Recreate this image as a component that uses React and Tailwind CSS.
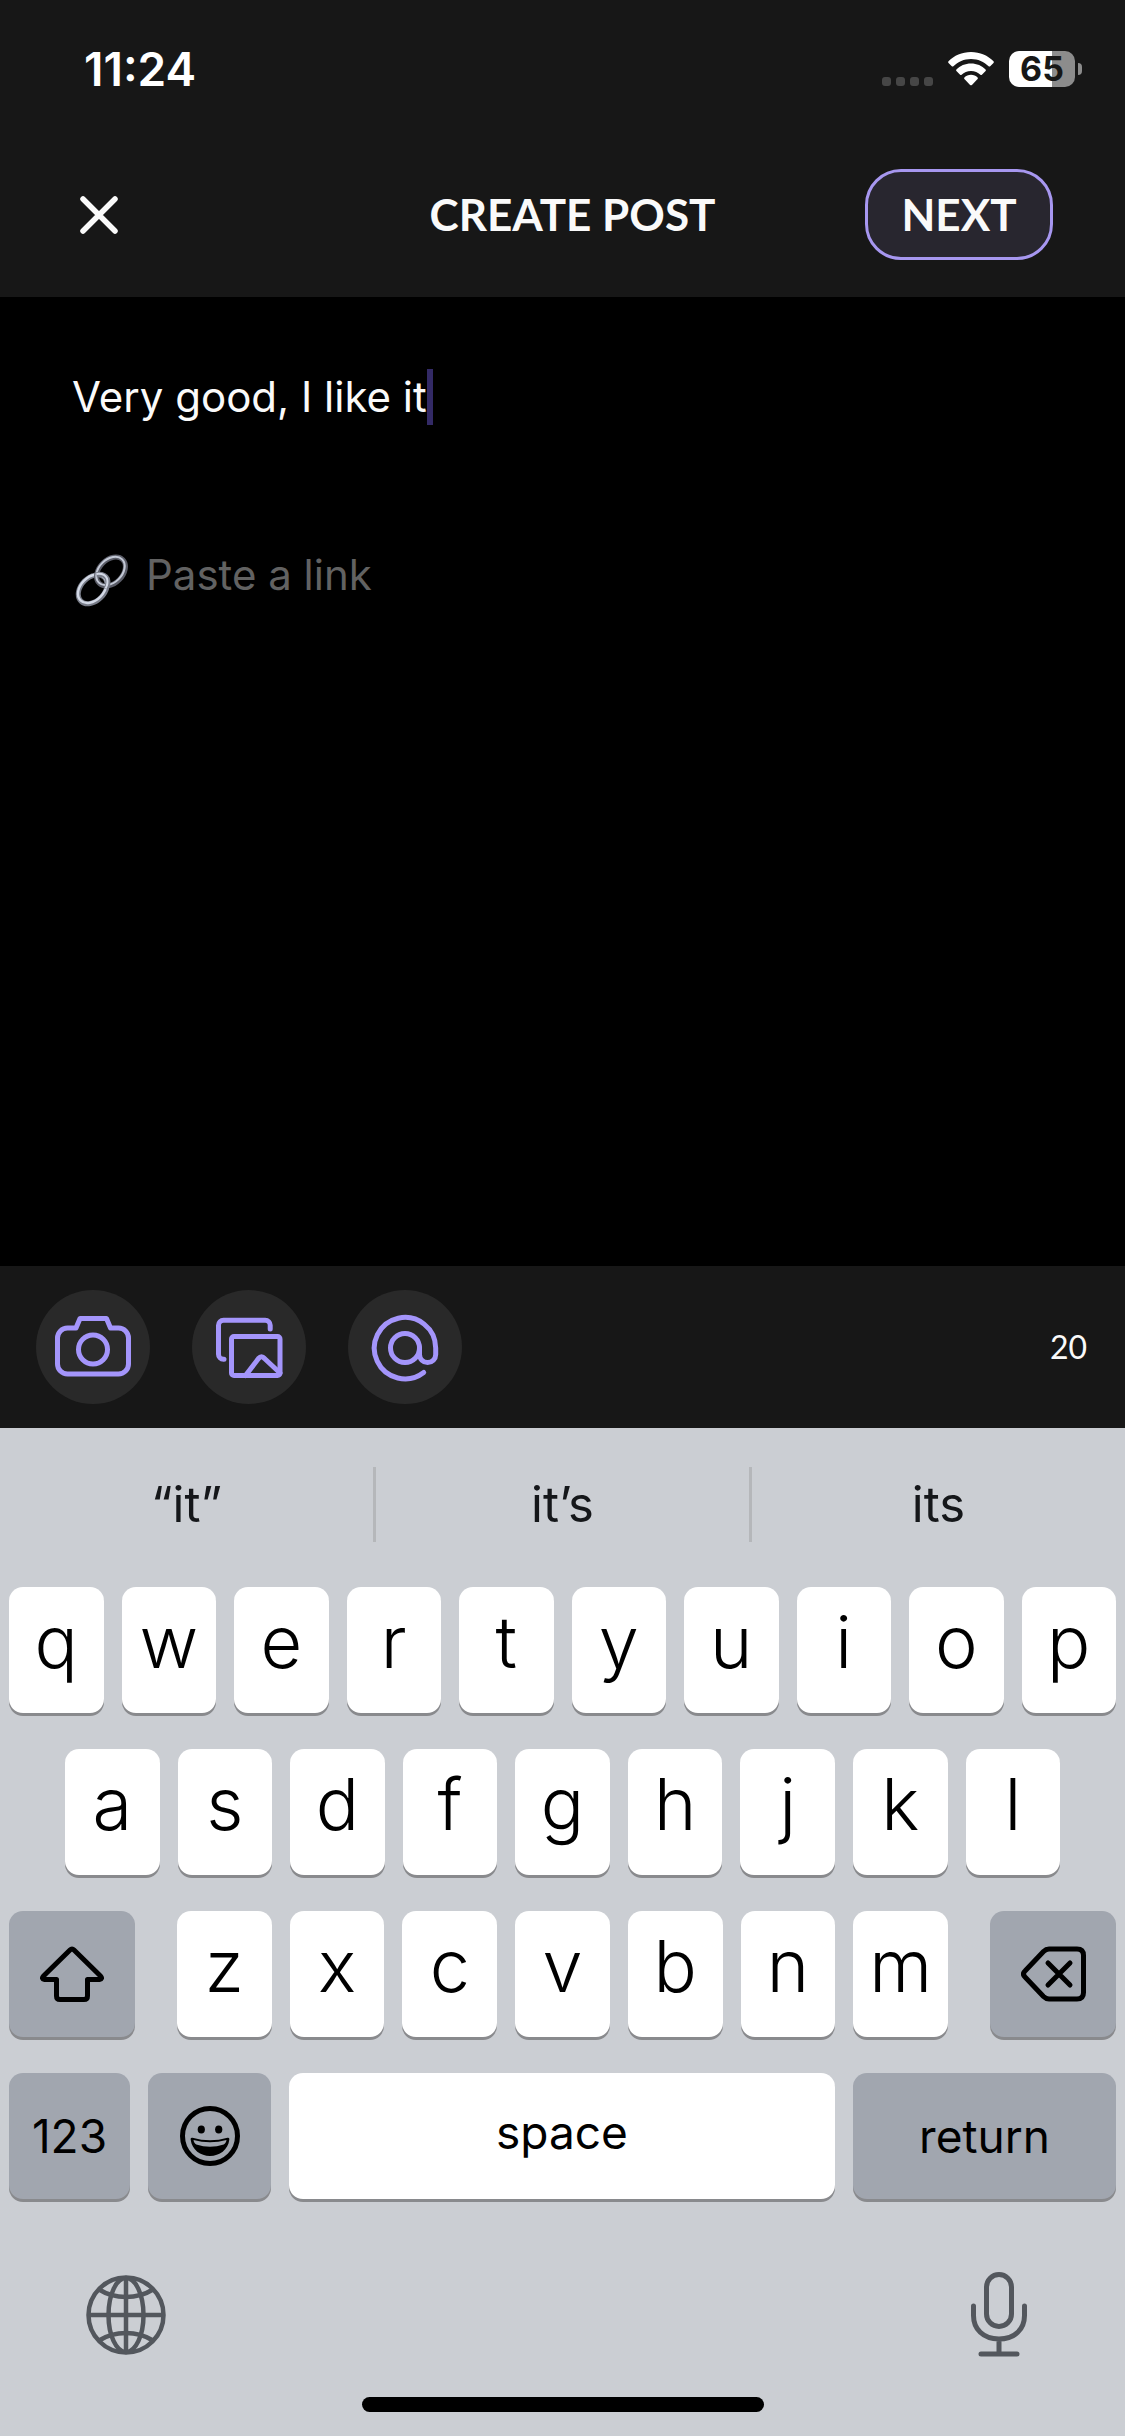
import React, { useState } from 'react';

const suggestions = ['“it”', 'it’s', 'its'];
const topRow = ['q', 'w', 'e', 'r', 't', 'y', 'u', 'i', 'o', 'p'];
const middleRow = ['a', 's', 'd', 'f', 'g', 'h', 'j', 'k', 'l'];
const bottomRow = ['z', 'x', 'c', 'v', 'b', 'n', 'm'];

const CameraIcon = () => (
  <>
    <path d="M31.5 38H40l4-9.5h26.5l4 9.5h8a10 10 0 0 1 10 10v26a10 10 0 0 1-10 10h-51a10 10 0 0 1-10-10V48a10 10 0 0 1 10-10z" />
    <circle cx="57" cy="59.5" r="14.5" />
  </>
);

const GalleryIcon = () => (
  <>
    <path d="M78.2 39v-3.7a5 5 0 0 0-5-5H31.5a5 5 0 0 0-5 5v29a5 5 0 0 0 5 5h.5" />
    <rect x="39.5" y="46.5" width="48.5" height="39" rx="2.5" />
    <path d="M53.5 85.5l13-17q3-3.500 6 0L88 83" />
  </>
);

const MentionIcon = () => (
  <>
    <circle cx="57" cy="58" r="14.5" />
    <path d="M71.5 58v6.5a8 8 0 0 0 16.2 0V58A30.7 30.7 0 1 0 75.7 82.5" />
  </>
);

const tools = [
  { label: 'Take a photo', Icon: CameraIcon },
  { label: 'Add from gallery', Icon: GalleryIcon },
  { label: 'Mention someone', Icon: MentionIcon }
];

function StatusBar() {
  return (
    <div className="flex items-center justify-between pl-[84px] pr-[43px] h-[138px]">
      <span className="text-[46px] leading-none font-semibold text-white">11:24</span>
      <div className="flex items-center">
        <div className="flex gap-[5px] mt-6 mr-[15px]">
          <i className="size-[9px] rounded-[3px] bg-[#464646]" />
          <i className="size-[9px] rounded-[3px] bg-[#464646]" />
          <i className="size-[9px] rounded-[3px] bg-[#464646]" />
          <i className="size-[9px] rounded-[3px] bg-[#464646]" />
        </div>
        <svg viewBox="0 0 46 34" className="w-[46px] h-[34px] mr-[15px]" fill="#fff">
          <path d="M23 0C32 0 40 3.6 45.5 9.3q.7.8 0 1.600l-3.300 3.300q-.8.700-1.600 0C36 9.800 30 7 23 7S10 9.800 5.400 14.200q-.8.700-1.600 0L.5 10.900q-.7-.8 0-1.600C6 3.600 14 0 23 0z" />
          <path d="M23 11.500c5.800 0 10.900 2.300 14.600 6q.7.800 0 1.600l-3.700 3.600q-.8.700-1.500 0C30 20.400 26.700 19 23 19s-7 1.400-9.400 3.700q-.7.700-1.500 0l-3.700-3.600q-.7-.8 0-1.600c3.700-3.700 8.800-6 14.600-6z" />
          <path d="M23 22.800c2.600 0 4.900 1 6.600 2.600q.7.800 0 1.600l-5.700 5.900q-.9.900-1.800 0L16.400 27q-.7-.8 0-1.600c1.700-1.600 4-2.600 6.600-2.600z" />
        </svg>
        <div className="flex items-center justify-center w-[66px] h-9 rounded-[10px] bg-[linear-gradient(to_right,#fff_65%,#8c8c8c_65%)]">
          <span className="text-[34px] leading-none font-bold text-[#171717]">65</span>
        </div>
        <i className="w-1 h-3 ml-[3px] rounded-r-full bg-[#8c8c8c]" />
      </div>
    </div>
  );
}

function Header() {
  return (
    <header className="grid grid-cols-[188px_1fr_188px] items-center h-[159px] pb-[6px] px-[72px] font-[Lato,sans-serif]">
      <button type="button" aria-label="Close" className="p-2 justify-self-start">
        <svg viewBox="0 0 38 38" className="size-[38px]" fill="none" stroke="#fafafa" strokeWidth="5.5" strokeLinecap="round">
          <path d="M3 3l32 32M35 3L3 35" />
        </svg>
      </button>
      <h1 className="pl-5 pb-[2px] text-center text-[44px] leading-none font-bold text-[#fafafa]">CREATE POST</h1>
      <button
        type="button"
        className="flex items-center justify-center h-[91px] pb-[2px] rounded-[36px] border-3 border-[#a797f0] bg-[#28262f] text-[44px] leading-none font-bold text-[#fafafa]"
      >
        NEXT
      </button>
    </header>
  );
}

function ChainIcon() {
  return (
    <svg viewBox="0 0 53 53" className="size-[53px]" fill="none">
      <ellipse cx="17.7" cy="35.3" rx="16.7" ry="11.7" transform="rotate(-45 17.7 35.3)" stroke="#777b87" strokeWidth="5" />
      <ellipse cx="17.2" cy="34.8" rx="16.5" ry="11.5" transform="rotate(-45 17.2 34.8)" stroke="#d3d9e6" strokeWidth="2.400" />
      <ellipse cx="36" cy="17.5" rx="16.7" ry="11.7" transform="rotate(-45 36 17.5)" stroke="#5b5d68" strokeWidth="5" />
      <ellipse cx="35.5" cy="17" rx="16.5" ry="11.5" transform="rotate(-45 35.5 17)" stroke="#c3c9d6" strokeWidth="2" />
      {/* lower ring passes back over the upper one */}
      <path d="M21.5 20.5q8-1 11 4.5 1.500 5-1.500 10" stroke="#777b87" strokeWidth="5" />
      <path d="M21.5 20q8-1 10.5 4.5 1.500 5-1.500 10" stroke="#d3d9e6" strokeWidth="2" />
    </svg>
  );
}

function Key({ children, className = '', ...rest }) {
  return (
    <button
      type="button"
      className={`flex items-center justify-center h-[126px] rounded-[14px] shadow-[0_3px_0_#898a8d] text-black ${className}`}
      {...rest}
    >
      {children}
    </button>
  );
}

function LetterKeys({ letters, onPress }) {
  return letters.map((letter) => (
    <Key
      key={letter}
      onClick={() => onPress(letter)}
      className="flex-1 bg-white pb-4 text-[72px] leading-none font-light"
    >
      {letter}
    </Key>
  ));
}

function Keyboard({ onPress, onDelete }) {
  return (
    <div className="bg-[#cbced3]">
      <div className="flex items-center h-[159px] pb-[6px]">
        {suggestions.map((word, i) => (
          <button
            key={word}
            type="button"
            className={`flex-1 h-[75px] text-[49px] leading-none text-[#15171a] ${i > 0 ? 'border-l-3 border-[#b5b7ba]' : ''}`}
          >
            {word}
          </button>
        ))}
      </div>

      <div className="flex flex-col gap-9 px-[9px]">
        <div className="flex gap-[18px]">
          <LetterKeys letters={topRow} onPress={onPress} />
        </div>
        <div className="flex gap-[18px] px-14">
          <LetterKeys letters={middleRow} onPress={onPress} />
        </div>
        <div className="flex gap-[42px]">
          <Key aria-label="Shift" className="w-[126px] bg-[#a1a6af]">
            <svg viewBox="0 0 64 56" className="w-16 h-14" fill="none" stroke="#000" strokeWidth="5" strokeLinejoin="round">
              <path d="M30 4q2-2 4 0l26.5 26q2.500 3-1 3.500H47.500V50q0 3.500-3.500 3.500H20q-3.500 0-3.500-3.500V33.500H4.500q-3.500-.5-1-3.500z" />
            </svg>
          </Key>
          <div className="flex flex-1 gap-[18px]">
            <LetterKeys letters={bottomRow} onPress={onPress} />
          </div>
          <Key aria-label="Delete" onClick={onDelete} className="w-[126px] bg-[#a1a6af]">
            <svg viewBox="0 0 65 56" className="w-[65px] h-14" fill="none" stroke="#000" strokeWidth="5" strokeLinecap="round" strokeLinejoin="round">
              <path d="M28 3h28q6.500 0 6.500 6.500v37q0 6.500-6.500 6.500H28q-3 0-5.500-2.500L4 31q-3-3 0-6L22.500 5.500Q25 3 28 3z" />
              <path d="M27 17l22 22M49 17l-22 22" />
            </svg>
          </Key>
        </div>
        <div className="flex gap-[18px]">
          <Key className="w-[121px] bg-[#a1a6af] text-[46px] leading-none">123</Key>
          <Key aria-label="Emoji" className="w-[123px] bg-[#a1a6af]">
            <svg viewBox="0 0 60 60" className="size-[60px]">
              <circle cx="30" cy="30" r="27.5" fill="none" stroke="#000" strokeWidth="5" />
              <ellipse cx="21.3" cy="23.5" rx="3.6" ry="4.1" />
              <ellipse cx="38.7" cy="23.5" rx="3.6" ry="4.1" />
              <path d="M12.5 31.800q17.500 5 35 0c1.500-.4 2 .4 1.800 2C48 44 39.500 50 30 50S12 44 10.700 33.800c-.2-1.600.3-2.400 1.800-2z" />
              <path d="M13.5 34q16.500 4.500 33 0c-.3 2.200-1.300 3.800-2.800 4.500q-13.700 4.500-27.400 0c-1.500-.7-2.500-2.300-2.800-4.500z" fill="#a1a6af" />
            </svg>
          </Key>
          <Key onClick={() => onPress(' ')} className="flex-1 bg-white pb-2 text-[46px] leading-none">space</Key>
          <Key className="w-[263px] bg-[#a1a6af] text-[46px] leading-none">return</Key>
        </div>
      </div>

      <div className="flex items-center justify-between px-[86px] pt-[73px]">
        <button type="button" aria-label="Next keyboard">
          <svg viewBox="0 0 80 80" className="size-20" fill="none" stroke="#53575d" strokeWidth="4.5">
            <circle cx="40" cy="40" r="37.5" />
            <path d="M40 3v74M3 40h74" />
            <ellipse cx="40" cy="40" rx="17.5" ry="37" />
            <path d="M13 14.5q12 7.500 27 7.500t27-7.500M13 65.500Q25 58 40 58t27 7.500" />
          </svg>
        </button>
        <button type="button" aria-label="Dictate" className="mr-3">
          <svg viewBox="0 0 56 86" className="w-14 h-[86px]" fill="none" stroke="#53575d" strokeWidth="5" strokeLinecap="round">
            <rect x="15.5" y="2.5" width="25" height="52" rx="12.5" />
            <path d="M2.5 34v9.500C2.500 57 12 67 28 67s25.500-10 25.500-23.500V34M28 67v14M10 82h36" />
          </svg>
        </button>
      </div>
      <div className="flex justify-center pt-[39px] pb-6">
        <i className="w-[402px] h-[15px] rounded-full bg-black" />
      </div>
    </div>
  );
}

export default function App() {
  const [text, setText] = useState('Very good, I like it');

  return (
    <div className="flex flex-col min-h-screen bg-black font-[Inter,sans-serif]">
      <div className="bg-[#171717]">
        <StatusBar />
        <Header />
      </div>

      <main className="flex-1 px-[72px] pt-[72px]">
        <div className="flex items-center h-14">
          <input
            aria-label="Post text"
            value={text}
            onChange={(e) => setText(e.target.value)}
            className="field-sizing-content bg-transparent outline-none text-[42px] leading-[56px] text-[#fafafa]"
          />
          <i className="w-[6px] h-14 bg-[#332a66]" />
        </div>
        <label className="flex items-center gap-[18px] pl-[3px] mt-[122px]">
          <ChainIcon />
          <input
            aria-label="Link"
            placeholder="Paste a link"
            className="flex-1 bg-transparent outline-none pb-[10px] text-[42px] leading-[56px] text-[#fafafa] placeholder:text-[#626262]"
          />
        </label>
      </main>

      <div className="flex items-center justify-between h-[162px] pl-9 pr-[38px] bg-[#171717]">
        <div className="flex gap-[42px]">
          {tools.map(({ label, Icon }) => (
            <button key={label} type="button" aria-label={label} className="size-[114px] rounded-full bg-[#292929]">
              <svg viewBox="0 0 114 114" className="size-[114px]" fill="none" stroke="#a495fb" strokeWidth="5" strokeLinecap="round" strokeLinejoin="round">
                <Icon />
              </svg>
            </button>
          ))}
        </div>
        <span className="text-[32px] text-[#fafafa] font-[Lato,sans-serif]">{text.length}</span>
      </div>

      <Keyboard
        onPress={(key) => setText(text + key)}
        onDelete={() => setText(text.slice(0, -1))}
      />
    </div>
  );
}
